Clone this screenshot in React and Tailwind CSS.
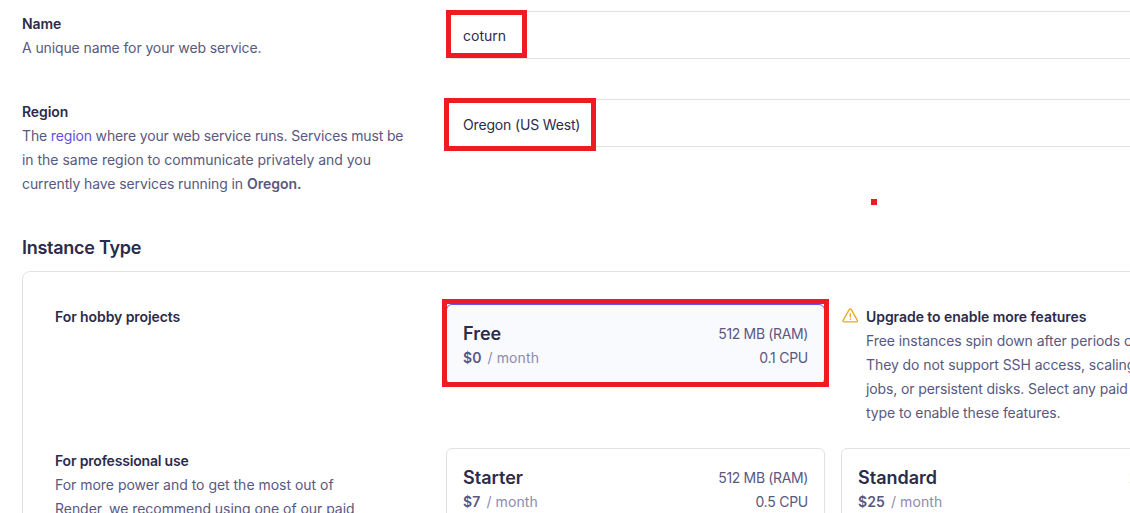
import React from "react";

function Marker({ className }) {
  return <div aria-hidden="true" className={`absolute border-[5px] border-[#ee1b24] ${className}`} />;
}

function Line({ className = "", children }) {
  return <span className={`block h-6 whitespace-nowrap ${className}`}>{children}</span>;
}

function Plan({ name, price, ram, cpu, selected }) {
  return (
    <div
      className={`flex h-[81px] w-[379px] shrink-0 justify-between rounded-md border px-4 pt-[17px] ${
        selected ? "border-[#6157e8] bg-[#f9fafe]" : "border-[#e1e1e4] bg-white"
      }`}
    >
      <div>
        <h3 className="h-6 text-lg/6 font-semibold text-[#2b2b4b]">{name}</h3>
        <p className="flex h-6 text-[#8c8bb0]">
          <span className="font-semibold tracking-[0.1px] text-[#59587f]">{price}</span>
          <span className="ml-1.5 tracking-[0.1px]">/ month</span>
        </p>
      </div>
      <div className="text-right">
        <Line className="tracking-[-0.36px]">{ram}</Line>
        <Line className="tracking-[-0.25px]">{cpu}</Line>
      </div>
    </div>
  );
}

function WarningIcon() {
  return (
    <svg className="mt-[3px] h-4 w-4 shrink-0" viewBox="0 0 16 16" fill="none" stroke="#e9a820" strokeWidth="1.3" strokeLinecap="round" strokeLinejoin="round">
      <path d="M7.2 1.6 1.1 12.4c-.4.7.1 1.5.9 1.5h12.5c.8 0 1.3-.8.9-1.5L9.3 1.6c-.5-.8-1.6-.8-2.1 0Z" />
      <path d="M8.3 5.7v3.2M8.3 11v.3" />
    </svg>
  );
}

export default function App() {
  return (
    <main className="relative h-[513px] w-[1130px] overflow-hidden bg-white pl-[22px] font-['Inter','Liberation_Sans',sans-serif] text-sm/6 text-[#59587f]">
      <section className="flex h-[88px] pt-[11px]">
        <div className="w-[424px] shrink-0 pt-px">
          <Line className="font-semibold tracking-[-0.1px] text-[#2b2b4b]">Name</Line>
          <Line className="tracking-[-0.11px]">A unique name for your web service.</Line>
        </div>
        <div className="flex h-12 w-[780px] shrink-0 items-center rounded-md border border-[#e1e1e4] px-4 pt-px text-[#2b2b4b]">coturn</div>
      </section>
      <section className="flex h-[148px] pt-[11px]">
        <div className="w-[424px] shrink-0 pt-px">
          <Line className="font-semibold tracking-[-0.1px] text-[#2b2b4b]">Region</Line>
          <Line className="tracking-[-0.15px]">The <a className="text-[#6150e8]">region</a> where your web service runs. Services must be</Line>
          <Line className="tracking-[-0.02px]">in the same region to communicate privately and you</Line>
          <Line className="tracking-[-0.1px]">currently have services running in <b className="font-semibold tracking-normal">Oregon.</b></Line>
        </div>
        <div className="flex h-12 w-[780px] shrink-0 items-center rounded-md border border-[#e1e1e4] px-4 pt-[3px] tracking-[-0.16px] text-[#2b2b4b]">Oregon (US West)</div>
      </section>
      <h2 className="h-[35px] text-lg/6 font-semibold tracking-[-0.26px] text-[#2b2b4b]">Instance Type</h2>
      <section className="h-[400px] w-[1204px] rounded-lg border border-[#e1e1e4] pl-8 pt-8">
        <div className="flex h-36">
          <div className="w-[391px] shrink-0 pt-px">
            <Line className="font-semibold tracking-[-0.08px] text-[#2b2b4b]">For hobby projects</Line>
          </div>
          <Plan name="Free" price="$0" ram="512 MB (RAM)" cpu="0.1 CPU" selected />
          <div className="ml-[17px] flex gap-2 pt-px">
            <WarningIcon />
            <div>
              <Line className="font-semibold tracking-[-0.06px] text-[#2b2b4b]">Upgrade to enable more features</Line>
              <Line className="tracking-[-0.07px]">Free instances spin down after periods of inactivity.</Line>
              <Line className="tracking-[-0.08px]">They do not support SSH access, scaling, one-off</Line>
              <Line className="tracking-[-0.12px]">jobs, or persistent disks. Select any paid instance</Line>
              <Line className="tracking-[-0.1px]">type to enable these features.</Line>
            </div>
          </div>
        </div>
        <div className="flex">
          <div className="w-[391px] shrink-0 pt-px">
            <Line className="font-semibold tracking-[-0.18px] text-[#2b2b4b]">For professional use</Line>
            <Line className="tracking-[-0.02px]">For more power and to get the most out of</Line>
            <Line className="tracking-[-0.04px]">Render, we recommend using one of our paid</Line>
          </div>
          <div className="flex gap-4">
            <Plan name="Starter" price="$7" ram="512 MB (RAM)" cpu="0.5 CPU" />
            <Plan name="Standard" price="$25" ram="2 GB (RAM)" cpu="1 CPU" />
          </div>
        </div>
      </section>
      <Marker className="left-[446px] top-[10px] h-12 w-[81px]" />
      <Marker className="left-[444px] top-[98px] h-[53px] w-[152px]" />
      <Marker className="left-[442px] top-[299px] h-[88px] w-[387px]" />
      <div aria-hidden="true" className="absolute left-[871px] top-[199px] size-1.5 bg-[#ee1b24]" />
    </main>
  );
}
